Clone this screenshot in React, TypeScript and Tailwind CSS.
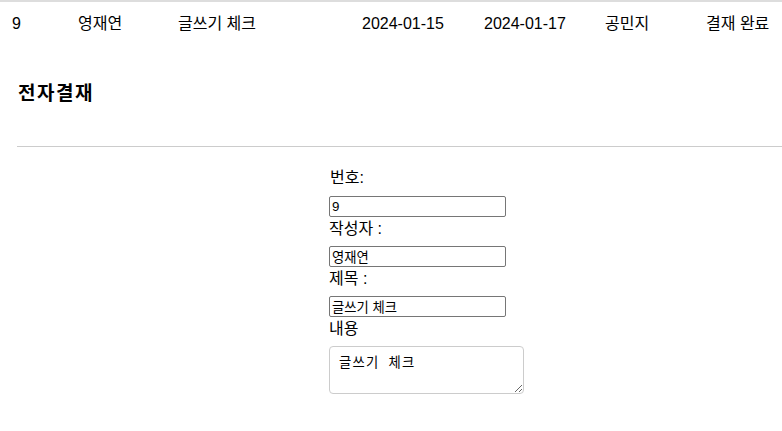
import React from "react";

const ROW = {
  no: "9",
  writer: "영재연",
  title: "글쓰기 체크",
  start: "2024-01-15",
  end: "2024-01-17",
  approver: "공민지",
  status: "결재 완료",
};

const FONT = "font-['Liberation_Sans','Noto_Sans_CJK_KR',sans-serif]";

const App: React.FC = () => {
  return (
    <div className={`min-h-[431px] w-[782px] bg-white text-black ${FONT}`}>
      <div className="flex h-[46px] items-center border-t-2 border-[#dddddd] text-base">
        <div className="w-[78px] pl-3">{ROW.no}</div>
        <div className="w-[100px]">{ROW.writer}</div>
        <div className="w-[184px]">{ROW.title}</div>
        <div className="w-[122px]">{ROW.start}</div>
        <div className="w-[121px]">{ROW.end}</div>
        <div className="w-[101px]">{ROW.approver}</div>
        <div className="whitespace-nowrap">{ROW.status}</div>
      </div>

      <div className="pl-[17px]">
        <h2 className="pt-[36px] pl-px text-[19px] font-bold leading-6 tracking-[1.5px]">전자결재</h2>
        <hr className="mt-[40px] border-t border-[#cccccc]" />
      </div>

      <form className="ml-[329px] mt-[19px] flex w-[200px] flex-col text-base">
        <label className="pl-px leading-6">번호:</label>
        <input
          readOnly
          value={ROW.no}
          className="mt-[6px] h-[21px] w-[177px] rounded-[2px] border border-[#767676] px-[2px] text-[13.33px]"
        />
        <label className="leading-6">작성자 :</label>
        <input
          readOnly
          value={ROW.writer}
          className="mt-[5px] h-[21px] w-[177px] rounded-[2px] border border-[#767676] px-[2px] text-[13.33px]"
        />
        <label className="leading-6">제목 :</label>
        <input
          readOnly
          value={ROW.title}
          className="mt-[5px] h-[21px] w-[177px] rounded-[2px] border border-[#767676] px-[2px] text-[13.33px]"
        />
        <label className="leading-6">내용</label>
        <textarea
          readOnly
          value={ROW.title}
          className="mt-[5px] h-[48px] w-[195px] rounded-[4px] border border-[#cccccc] px-[9px] pt-[8px] pb-[4px] font-['DejaVu_Sans_Mono','Noto_Sans_CJK_KR',monospace] text-[13.33px] leading-4 tracking-[1.2px]"
        />
      </form>
    </div>
  );
};

export default App;
